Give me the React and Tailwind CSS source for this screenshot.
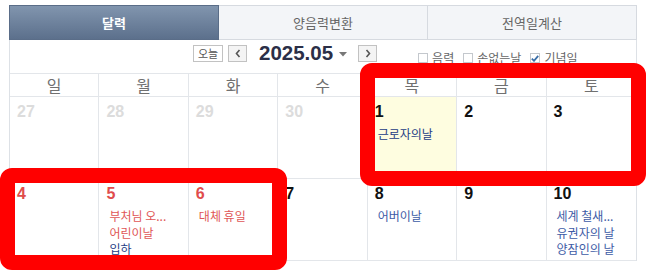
import React from 'react';

const KR = { fontFamily: '"Noto Sans CJK KR", "Noto Sans", sans-serif' };
const NUM = { fontFamily: '"Liberation Sans", Arial, sans-serif' };

const WEEKDAYS = ['일', '월', '화', '수', '목', '금', '토'];

const ROWS = [
  [
    { d: '27', dim: true },
    { d: '28', dim: true },
    { d: '29', dim: true },
    { d: '30', dim: true },
    { d: '1', today: true, events: [{ t: '근로자의날', c: 'navy' }] },
    { d: '2' },
    { d: '3' },
  ],
  [
    { d: '4', red: true },
    {
      d: '5',
      red: true,
      events: [
        { t: '부처님 오...', c: 'red' },
        { t: '어린이날', c: 'red' },
        { t: '입하', c: 'navy' },
      ],
    },
    { d: '6', red: true, events: [{ t: '대체 휴일', c: 'red' }] },
    { d: '7' },
    { d: '8', events: [{ t: '어버이날', c: 'blue' }] },
    { d: '9' },
    {
      d: '10',
      events: [
        { t: '세계 철새...', c: 'blue' },
        { t: '유권자의 날', c: 'blue' },
        { t: '양잠인의 날', c: 'blue' },
      ],
    },
  ],
];

const eventColor = {
  red: 'text-[#e05656]',
  navy: 'text-[#243c84]',
  blue: 'text-[#3d5ba6]',
};

function Chevron({ dir }) {
  return (
    <svg width="6" height="9" viewBox="0 0 6 9">
      <path
        d={dir === 'left' ? 'M4.5 1 L1.5 4.5 L4.5 8' : 'M1.5 1 L4.5 4.5 L1.5 8'}
        fill="none"
        stroke="#555"
        strokeWidth="1.6"
      />
    </svg>
  );
}

function Check({ label, checked }) {
  return (
    <label className="flex items-center gap-[4px] text-[12px] leading-[12px] text-[#666]" style={KR}>
      <span className="flex h-[10px] w-[10px] items-center justify-center border border-[#c4c8cd] bg-white">
        {checked && (
          <svg width="8" height="7" viewBox="0 0 8 7">
            <path d="M0.8 3.6 L3 5.8 L7.2 0.8" fill="none" stroke="#3b6fa8" strokeWidth="1.8" />
          </svg>
        )}
      </span>
      {label}
    </label>
  );
}

function Cell({ cell, last }) {
  const dateColor = cell.dim ? 'text-[#dcdcdc]' : cell.red ? 'text-[#e04c4c]' : 'text-[#111]';
  return (
    <div
      className={`h-[82px] border-b border-[#e3e6ea] pl-[7px] pt-[5px] ${last ? '' : 'border-r'} ${
        cell.today ? 'bg-[#fefde0]' : 'bg-white'
      }`}
    >
      <div className={`text-[16px] font-bold leading-[20px] ${dateColor}`} style={NUM}>
        {cell.d}
      </div>
      {cell.events && (
        <div className="mt-[4px] pl-[3px]">
          {cell.events.map((e) => (
            <div key={e.t} className={`whitespace-nowrap text-[12px] leading-[16.5px] ${eventColor[e.c]}`} style={KR}>
              {e.t}
            </div>
          ))}
        </div>
      )}
    </div>
  );
}

export default function App() {
  return (
    <div className="relative h-[271px] w-[647px] overflow-hidden bg-white pl-[9px] pr-[10px] pt-[5px]">
      <div className="flex h-[35px]" style={KR}>
        <div className="flex flex-1 items-center justify-center border border-[#5a6d88] bg-gradient-to-b from-[#8195ae] to-[#5c708c] text-[13px] font-bold text-white">
          달력
        </div>
        <div className="flex flex-1 items-center justify-center border-y border-r border-[#d6dae0] bg-[#f3f5f8] text-[13px] text-[#666]">
          양음력변환
        </div>
        <div className="flex flex-1 items-center justify-center border-y border-r border-[#d6dae0] bg-[#f3f5f8] text-[13px] text-[#666]">
          전역일계산
        </div>
      </div>

      <div className="border-x border-[#dde1e6]">
        <div className="flex h-[33px] items-start pl-[183px] pt-[5px]">
          <button
            type="button"
            className="flex h-[17px] w-[30px] items-center justify-center border border-[#c2c2c2] bg-white text-[11px] text-[#555]"
            style={KR}
          >
            오늘
          </button>
          <button
            type="button"
            className="ml-[5px] flex h-[17px] w-[19px] items-center justify-center border border-[#c2c2c2] bg-[#f4f4f4]"
          >
            <Chevron dir="left" />
          </button>
          <div className="ml-[12px] mt-[-4px] text-[20.5px] font-bold leading-[24px] text-[#2b2f47]" style={NUM}>
            2025.05
          </div>
          <svg className="ml-[6px] mt-[7px]" width="8" height="5" viewBox="0 0 8 5">
            <path d="M0 0 H8 L4 4.5 Z" fill="#777" />
          </svg>
          <button
            type="button"
            className="ml-[11px] flex h-[17px] w-[19px] items-center justify-center border border-[#c2c2c2] bg-[#f4f4f4]"
          >
            <Chevron dir="right" />
          </button>
          <div className="ml-[41px] mt-[7px] flex gap-[9px]">
            <Check label="음력" />
            <Check label="손없는날" />
            <Check label="기념일" checked />
          </div>
        </div>

        <div className="grid grid-cols-7 border-y border-[#e3e6ea]">
          {WEEKDAYS.map((w, i) => (
            <div
              key={w}
              className={`flex h-[22px] items-center justify-center text-[16px] text-[#707070] ${
                i < 6 ? 'border-r border-[#e3e6ea]' : ''
              }`}
              style={KR}
            >
              {w}
            </div>
          ))}
        </div>

        {ROWS.map((row, r) => (
          <div key={r} className="grid grid-cols-7">
            {row.map((cell, i) => (
              <Cell key={cell.d} cell={cell} last={i === 6} />
            ))}
          </div>
        ))}
      </div>

      <div className="absolute left-[360px] top-[63px] h-[123px] w-[286px] rounded-[12px] border-[15px] border-[#ff0000]" />
      <div className="absolute left-[0px] top-[168px] h-[102px] w-[287px] rounded-[12px] border-[15px] border-[#ff0000]" />
    </div>
  );
}
